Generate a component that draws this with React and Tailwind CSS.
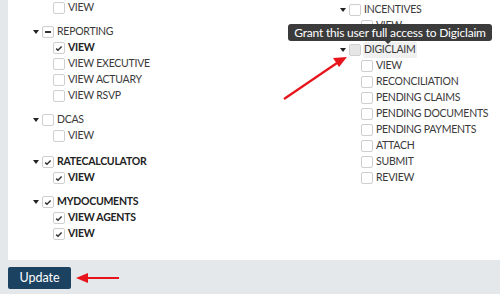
import React from "react";

const leftGroups = [
  { caret: false, items: [{ label: "VIEW" }] },
  {
    label: "REPORTING",
    state: "partial",
    items: [{ label: "VIEW", checked: true }, { label: "VIEW EXECUTIVE" }, { label: "VIEW ACTUARY" }, { label: "VIEW RSVP" }],
  },
  { label: "DCAS", items: [{ label: "VIEW" }] },
  { label: "RATECALCULATOR", state: "checked", gap: "mt-[10px]", items: [{ label: "VIEW", checked: true }] },
  {
    label: "MYDOCUMENTS",
    state: "checked",
    items: [{ label: "VIEW AGENTS", checked: true }, { label: "VIEW", checked: true }],
  },
];

const rightGroups = [
  { label: "INCENTIVES", items: [{ label: "VIEW" }] },
  {
    label: "DIGICLAIM",
    hover: true,
    items: [
      { label: "VIEW" },
      { label: "RECONCILIATION" },
      { label: "PENDING CLAIMS" },
      { label: "PENDING DOCUMENTS" },
      { label: "PENDING PAYMENTS" },
      { label: "ATTACH" },
      { label: "SUBMIT" },
      { label: "REVIEW" },
    ],
  },
];

function Box({ state, hover }) {
  return (
    <span
      className={`w-3 h-3 shrink-0 border rounded-[2px] flex items-center justify-center ${
        hover ? "bg-[#e6e6e6] border-[#d0d0d0]" : "bg-white border-[#cfcfcf]"
      }`}
    >
      {state === "checked" && (
        <svg width="10" height="10" viewBox="0 0 10 10">
          <path d="M2.2 5.6 L4 7.3 L7.6 3.6" fill="none" stroke="#333" strokeWidth="1.5" />
        </svg>
      )}
      {state === "partial" && <span className="w-[6px] h-[1.5px] bg-[#333]" />}
    </span>
  );
}

function Caret() {
  return (
    <span className="w-[9px] shrink-0 flex">
      <span className="w-0 h-0 border-l-[3px] border-r-[3px] border-t-[4px] border-l-transparent border-r-transparent border-t-[#222]" />
    </span>
  );
}

function Group({ g, first, childIndent }) {
  const margin = first ? "" : g.gap || "mt-2";
  return (
    <div className={margin}>
      {g.caret !== false && (
        <div className="h-4 flex items-center">
          <Caret />
          <Box state={g.state} hover={g.hover} />
          <span
            className={`ml-[2px] px-px rounded-[2px] ${g.state === "checked" ? "font-bold text-[#222]" : ""} ${
              g.hover ? "bg-[#f0f0f0]" : ""
            }`}
          >
            {g.label}
          </span>
        </div>
      )}
      {g.items.map((it, i) => (
        <div key={i} className={`h-4 flex items-center ${childIndent}`}>
          <Box state={it.checked ? "checked" : null} />
          <span className={`ml-[3px] ${it.checked ? "font-bold text-[#222]" : ""}`}>{it.label}</span>
        </div>
      ))}
    </div>
  );
}

export default function App() {
  return (
    <div className="w-[500px] h-[294px] bg-[#e4e8eb] flex flex-col relative overflow-hidden font-['Lato',sans-serif] text-[10.5px] tracking-[-0.25px] text-[#3a3a3a]">
      <div className="ml-2 h-[260px] bg-white flex items-start pl-[25px]">
        <div className="w-[307px]">
          {leftGroups.map((g, i) => (
            <Group key={i} g={g} first={i === 0} childIndent="pl-[20px]" />
          ))}
        </div>
        <div className="mt-[2px]">
          {rightGroups.map((g, i) => (
            <Group key={i} g={g} first={i === 0} childIndent="pl-[21px]" />
          ))}
        </div>
      </div>
      <div className="pl-2 pt-[7px] flex items-center">
        <button className="w-[63px] h-[22px] bg-[#1c4262] rounded-[2px] text-white text-[12.5px] tracking-normal leading-none">
          Update
        </button>
      </div>

      <div className="absolute left-[288px] top-[24px] w-[204px] h-[17px] bg-[#3b3b3b] rounded-[3px] text-white text-[12px] tracking-[-0.2px] flex items-center justify-center">
        Grant this user full access to Digiclaim
        <span className="absolute left-[97px] top-[17px] w-0 h-0 border-l-[3px] border-r-[3px] border-t-[3px] border-l-transparent border-r-transparent border-t-[#3b3b3b]" />
      </div>

      <svg className="absolute left-0 top-0 pointer-events-none" width="500" height="294">
        <line x1="284" y1="99" x2="337" y2="63" stroke="#e8141b" strokeWidth="2.2" />
        <polygon points="347,57 333,58 339,67" fill="#e8141b" />
        <line x1="86" y1="278" x2="119" y2="278" stroke="#e8141b" strokeWidth="2.2" />
        <polygon points="76,278 88,273 88,283" fill="#e8141b" />
      </svg>
    </div>
  );
}
